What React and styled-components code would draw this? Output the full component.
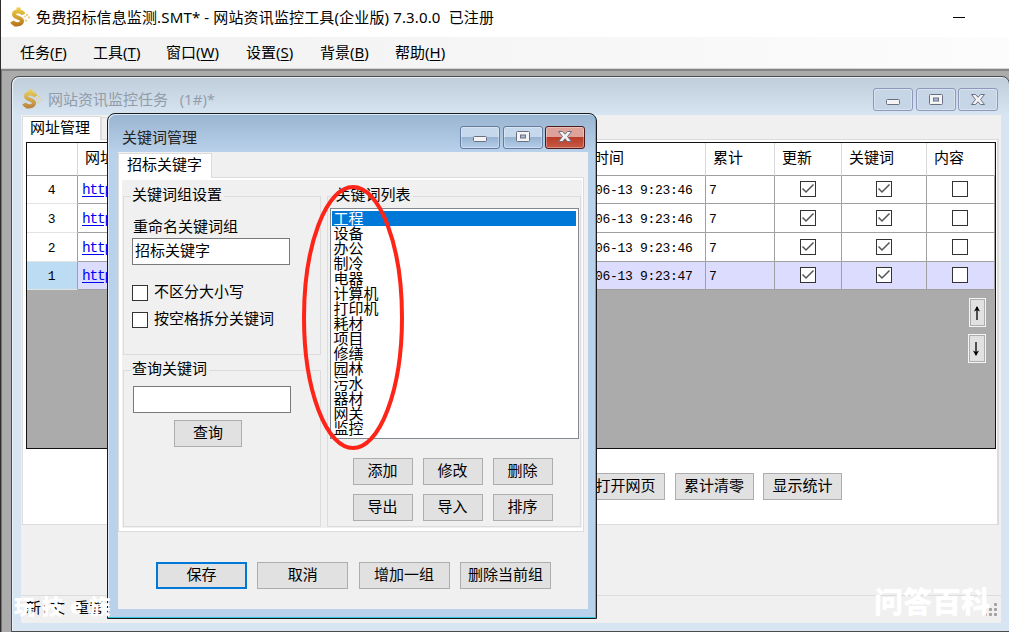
import React from "react";
import styled, { createGlobalStyle, css } from "styled-components";

const GlobalStyle = createGlobalStyle`
  * {
    box-sizing: border-box;
  }
  body {
    margin: 0;
    overflow: hidden;
    color: #000;
    font-family: "Liberation Mono", "Noto Sans CJK SC", sans-serif;
    font-size: 15px;
    line-height: 1;
    white-space: pre;
  }
`;

const Screen = styled.div`
  position: relative;
  display: flex;
  flex-direction: column;
  width: 1009px;
  height: 632px;
  overflow: hidden;
  border-left: 1px solid #2d2b2b;
  background: #ababab;
`;
const TitleBar = styled.header`
  display: flex;
  align-items: center;
  justify-content: space-between;
  height: 37px;
  padding: 0 44px 2px 9px;
  background: #fff;
  font-family: "Noto Sans", "Noto Sans CJK SC", sans-serif;
  letter-spacing: 0.14px;
`;
const TitleGroup = styled.div`
  display: flex;
  align-items: center;
  gap: 5px;
`;
const MinimizeLine = styled.div`
  width: 12px;
  height: 1px;
  background: #000;
`;
const MenuBar = styled.nav`
  display: flex;
  align-items: center;
  height: 32px;
  padding: 0 0 0 19px;
  gap: 25px;
  background: linear-gradient(90deg, #f0f0f0, #fcfcfc);
  border-bottom: 1px solid #d5d5d5;
  font-family: "Noto Sans", "Noto Sans CJK SC", sans-serif;
`;
const MenuItem = styled.span`
  width: ${(props) => props.$width}px;
  u {
    text-underline-offset: 2px;
  }
`;
const Workspace = styled.main`
  position: relative;
  flex: 1;
  border-top: 2px solid #858585;
  border-left: 1px solid #747474;
`;

const Window = styled.section`
  position: absolute;
  isolation: isolate;
  display: flex;
  flex-direction: column;
  border: 1px solid #4b4b4b;
  border-radius: 8px 8px 0 0;
`;
const TaskWindow = styled(Window)`
  left: 9px;
  top: 5px;
  width: 999px;
  height: 556px;
  padding: 0 8px 8px 9px;
  background: linear-gradient(#bfcddb, #d7e4f2 38px);
  box-shadow: inset 1px 1px 0 #e9f0f7;
`;
const KeywordWindow = styled(Window)`
  left: 105px;
  top: 42px;
  width: 490px;
  height: 506px;
  padding: 0 8px 9px 10px;
  border-color: #1b1b1b;
  background: linear-gradient(#99b4d1, #b9d1ea 38px);
  box-shadow: inset -1px -1px 0 #2fc4dc, inset 1px 1px 0 #dcebfa;
`;
const Caption = styled.div`
  display: flex;
  align-items: center;
  justify-content: space-between;
  height: 38px;
  padding: ${(props) => props.$padding};
  color: ${(props) => props.$color};
  font-family: "Open Sans", "Noto Sans CJK SC", sans-serif;
`;
const CaptionButtons = styled.div`
  display: flex;
  gap: 2.5px;
`;
const activeFace = css`
  border-color: #627b9f;
  background: linear-gradient(#c6d8eb 48%, #98b4d2 50%, #b4cee9);
`;
const closeFace = css`
  border-color: #4d1b1b;
  background: linear-gradient(#dda29a 46%, #bb3d2a 50%, #c65a45);
`;
const CaptionButton = styled.button`
  display: flex;
  align-items: center;
  justify-content: center;
  width: 40px;
  height: 23px;
  padding: 0;
  border: 1px solid #8f98bb;
  border-radius: 3px;
  background: #c7d6e7;
  box-shadow: inset 0 0 0 1px #ffffff55;
  ${(props) => props.$active && activeFace}
  ${(props) => props.$close && closeFace}
`;
const ClientArea = styled.div`
  display: flex;
  flex-direction: column;
  flex: 1;
  background: #f0f0f0;
`;

const Tabs = styled.div`
  display: flex;
  align-items: flex-end;
  height: ${(props) => props.$height}px;
  padding-left: ${(props) => props.$left || 0}px;
`;
const Tab = styled.div`
  display: flex;
  align-items: center;
  width: ${(props) => props.$width}px;
  height: ${(props) => props.$height}px;
  padding: 1px 0 0 ${(props) => props.$indent || 8}px;
  margin-bottom: -1px;
  z-index: 1;
  background: #fff;
  border: 1px solid #dcdcdc;
  border-bottom: 0;
`;
const SideTab = styled(Tab)`
  height: 22px;
  padding-left: 4px;
  margin-bottom: 0;
  background: #f0f0f0;
`;
const TaskPage = styled.div`
  height: 386px;
  margin: 0 2px 0 1px;
  padding: 2px 1px 0 3px;
  background: #fff;
  border: 1px solid #dcdcdc;
  border-width: 1px 2px 1px 1px;
`;
const Grid = styled.div`
  display: flex;
  flex-direction: column;
  width: 970px;
  height: 307px;
  border: 1px solid #111;
  background: #ababab;
`;
const GridRow = styled.div`
  display: grid;
  grid-template-columns: 51px 512px 116px 69px 67px 85px 68px;
  height: ${(props) => props.$height}px;
  background: ${(props) => (props.$selected ? "#dcdcff" : "#fff")};
`;
const Cell = styled.div`
  display: flex;
  align-items: center;
  padding: 2px 0 0 ${(props) => props.$left ?? 3}px;
  border-right: 1px solid #a0a0a0;
  border-bottom: 1px solid #a0a0a0;
  font-size: 13px;
  letter-spacing: -0.3px;
`;
const CheckCell = styled(Cell)`
  justify-content: center;
  padding: 0 1px 1px 0;
`;
const HeadCell = styled(Cell)`
  padding: 1px 0 0 ${(props) => props.$left ?? 7}px;
  border-right-color: #d8d8d8;
  font-size: 15px;
  letter-spacing: 0;
`;
const RowHead = styled(Cell)`
  justify-content: center;
  padding: 2px 1px 0 0;
  border-bottom-color: #e2e2e2;
  background: ${(props) => (props.$selected ? "#bcdcf4" : "#fff")};
`;
const Link = styled.a`
  color: #0000f8;
  font-size: 14.5px;
  letter-spacing: -1.2px;
  text-decoration: underline;
  text-underline-offset: 2px;
`;
const Box = styled.span`
  display: flex;
  flex: none;
  width: 16px;
  height: 16px;
  border: 1px solid #333;
  background: #fff;
`;
const MoveButtons = styled.div`
  display: flex;
  flex-direction: column;
  align-items: flex-end;
  gap: 7px;
  padding: 8px 9px 0 0;
`;
const MoveButton = styled.button`
  display: flex;
  align-items: center;
  justify-content: center;
  width: ${(props) => props.$width}px;
  height: 29px;
  padding: 0 2px 0 0;
  border: 1px solid #f5f5f5;
  background: #e1e1e1;
  box-shadow: inset 0 0 0 1px #adadad;
`;
const TaskActions = styled.div`
  display: flex;
  gap: 9.5px;
  padding: 24px 0 0 560px;
`;
const Button = styled.button`
  display: flex;
  align-items: center;
  justify-content: center;
  flex: none;
  width: ${(props) => props.$width || 60}px;
  height: 27px;
  margin: ${(props) => props.$margin || 0};
  padding: 2px 0 0;
  border: ${(props) => (props.$primary ? "2px solid #0078d7" : "1px solid #adadad")};
  background: #e1e1e1;
  color: #000;
  font: inherit;
`;
const StatusBar = styled.footer`
  display: flex;
  align-items: center;
  justify-content: space-between;
  height: 28px;
  margin-top: auto;
  padding: 0 3px 0 5px;
  border-top: 1px solid #dcdcdc;
`;

const KeywordPage = styled.div`
  display: flex;
  gap: 6px;
  width: 466px;
  height: 355px;
  padding: 10px 2px 3px 4px;
  background: #f0f0f0;
  border: 1px solid #dcdcdc;
  box-shadow: inset 3px 2px 0 #fff, inset -1px -3px 0 #fff;
`;
const GroupColumn = styled.div`
  display: flex;
  flex-direction: column;
  gap: 7px;
  width: 198px;
`;
const Group = styled.fieldset`
  display: flex;
  flex-direction: column;
  min-width: 0;
  width: ${(props) => props.$width}px;
  height: ${(props) => props.$height}px;
  margin: 0;
  padding: ${(props) => props.$padding};
  border: 1px solid #dcdcdc;
`;
const GroupTitle = styled.legend`
  height: 16px;
  margin-left: ${(props) => props.$shift}px;
  padding: 1px 2px 0 1px;
`;
const TextField = styled.input`
  width: 158px;
  height: 27px;
  margin: ${(props) => props.$margin};
  padding: 0 2px 3px;
  border: 1px solid #7a7a7a;
  background: #fff;
  font: inherit;
`;
const CheckLabel = styled.label`
  display: flex;
  align-items: center;
  gap: 6px;
  height: 16px;
  margin: ${(props) => props.$margin};
`;
const ListBox = styled.ul`
  width: 249px;
  height: 231px;
  margin: 0;
  padding: 2px 2px 0 1px;
  border: 1px solid #828790;
  background: #fff;
  list-style: none;
`;
const ListItem = styled.li`
  height: 15px;
  padding-left: 2px;
  line-height: 19px;
  color: ${(props) => (props.$selected ? "#fff" : "#000")};
  background: ${(props) => (props.$selected ? "#0078d7" : "transparent")};
`;
const ActionGrid = styled.div`
  display: grid;
  grid-template-columns: repeat(3, 60px);
  gap: 9px 10px;
  padding: 19px 0 0 23px;
`;
const DialogActions = styled.div`
  display: flex;
  gap: 10.3px;
  padding: 30px 0 0 38px;
`;
const EllipseMark = styled.svg`
  position: absolute;
  left: 299px;
  top: 184px;
`;
const Watermark = styled.div`
  position: absolute;
  left: ${(props) => props.$left}px;
  top: ${(props) => props.$top}px;
  color: #fff;
  font-family: "Noto Sans CJK SC", sans-serif;
  font-size: ${(props) => props.$size}px;
  font-weight: 900;
  letter-spacing: ${(props) => props.$spacing || 0}px;
`;

const DollarIcon = ({ faded }) => (
  <svg width="21" height="21" viewBox="0 0 21 21" opacity={faded ? 0.85 : 1}>
    <defs>
      <linearGradient id="gold" x1="0" y1="0" x2="0" y2="1">
        <stop offset="0" stopColor="#efd044" />
        <stop offset="0.6" stopColor="#cf9a30" />
        <stop offset="1" stopColor="#b3701f" />
      </linearGradient>
    </defs>
    <path
      d="M13.500 7.500C12 3.500 4 3.800 4 7.500C4 11 13 10.500 12 14.500C11 18.500 3.500 17.500 2 14.500M8.500 0.500V5M6 16V19.500"
      fill="none"
      stroke="url(#gold)"
      strokeWidth="4"
    />
    <g fill="#ead391">
      <circle cx="15" cy="9.500" r="1" />
      <circle cx="17" cy="8" r="1.200" />
      <circle cx="19" cy="10.500" r="1.200" />
      <circle cx="16" cy="13.500" r="1.200" />
    </g>
  </svg>
);

const WindowGlyph = ({ kind }) => (
  <svg width="16" height="14" viewBox="0 0 16 14">
    {kind === "min" && (
      <rect x="1.500" y="6.500" width="13" height="5" rx="1" fill="#f4f4f4" stroke="#6b6e82" />
    )}
    {kind === "max" && (
      <g fill="#f4f4f4" stroke="#6b6e82">
        <rect x="1.500" y="1.500" width="13" height="10" rx="1" />
        <rect x="5.500" y="5" width="5" height="3" fill="#a9bdd6" />
      </g>
    )}
    {kind === "close" && (
      <path
        d="M1.500 1.500H5.500L8 4.300L10.500 1.500H14.500L10.500 6.500L14.500 11.500H10.500L8 8.700L5.500 11.500H1.500L5.500 6.500Z"
        fill="#f4f4f4"
        stroke="#6b6e82"
      />
    )}
  </svg>
);

const WindowControls = ({ active }) => (
  <CaptionButtons>
    {["min", "max", "close"].map((kind) => (
      <CaptionButton key={kind} $active={active} $close={active && kind === "close"}>
        <WindowGlyph kind={kind} />
      </CaptionButton>
    ))}
  </CaptionButtons>
);

const Check = ({ checked }) => (
  <Box>
    {checked && (
      <svg width="14" height="14" viewBox="0 0 14 14">
        <path d="M1.500 6.500L5 10L12.500 2.500" fill="none" stroke="#555" strokeWidth="1.500" />
      </svg>
    )}
  </Box>
);

const Arrow = ({ down }) => (
  <svg width="8" height="16" viewBox="0 0 8 16" transform={down ? "rotate(180)" : undefined}>
    <path d="M4 15V2" stroke="#000" strokeWidth="1.300" />
    <path d="M4 1L7 6.500L4 5L1 6.500Z" fill="#000" />
  </svg>
);

const SizeGrip = () => (
  <svg width="15" height="15" viewBox="0 0 15 15" fill="#a0a0a0">
    {[[11, 1], [6, 6], [11, 6], [1, 11], [6, 11], [11, 11]].map(([x, y]) => (
      <rect key={`${x}-${y}`} x={x} y={y} width="3" height="3" rx="1" />
    ))}
  </svg>
);

const menus = [
  { name: "任务", hotkey: "F", width: 48 },
  { name: "工具", hotkey: "T", width: 48 },
  { name: "窗口", hotkey: "W", width: 55 },
  { name: "设置", hotkey: "S", width: 49 },
  { name: "背景", hotkey: "B", width: 50 },
  { name: "帮助", hotkey: "H", width: 51 },
];

const rows = [
  { id: 4, time: "06-13 9:23:46", height: 28 },
  { id: 3, time: "06-13 9:23:46", height: 29 },
  { id: 2, time: "06-13 9:23:46", height: 29 },
  { id: 1, time: "06-13 9:23:47", height: 28, selected: true },
];

const keywords = [
  "工程",
  "设备",
  "办公",
  "制冷",
  "电器",
  "计算机",
  "打印机",
  "耗材",
  "项目",
  "修缮",
  "园林",
  "污水",
  "器材",
  "网关",
  "监控",
];

const TaskGrid = () => (
  <Grid>
    <GridRow $height={33}>
      <HeadCell />
      <HeadCell>网址</HeadCell>
      <HeadCell $left={4}>时间</HeadCell>
      <HeadCell>累计</HeadCell>
      <HeadCell>更新</HeadCell>
      <HeadCell>关键词</HeadCell>
      <HeadCell>内容</HeadCell>
    </GridRow>
    {rows.map((row) => (
      <GridRow key={row.id} $height={row.height} $selected={row.selected}>
        <RowHead $selected={row.selected}>{row.id}</RowHead>
        <Cell $left={4}>
          <Link>http</Link>
        </Cell>
        <Cell $left={5}>{row.time}</Cell>
        <Cell>7</Cell>
        <CheckCell>
          <Check checked />
        </CheckCell>
        <CheckCell>
          <Check checked />
        </CheckCell>
        <CheckCell>
          <Check />
        </CheckCell>
      </GridRow>
    ))}
    <MoveButtons>
      <MoveButton $width={17}>
        <Arrow />
      </MoveButton>
      <MoveButton $width={18}>
        <Arrow down />
      </MoveButton>
    </MoveButtons>
  </Grid>
);

const KeywordDialog = () => (
  <KeywordWindow>
    <Caption $padding="8px 3px 0 4px" $color="#222">
      <span>关键词管理</span>
      <WindowControls active />
    </Caption>
    <ClientArea>
      <Tabs $height={25}>
        <Tab $width={94} $height={25}>
          招标关键字
        </Tab>
      </Tabs>
      <KeywordPage>
        <GroupColumn>
          <Group $height={167} $padding="17px 0 0 9px">
            <GroupTitle $shift={-2}>关键词组设置</GroupTitle>
            <span>重命名关键词组</span>
            <TextField $margin="2px 0 0 -1px" defaultValue="招标关键字" />
            <CheckLabel $margin="20px 0 0 -1px">
              <Check />
              不区分大小写
            </CheckLabel>
            <CheckLabel $margin="11px 0 0 -1px">
              <Check />
              按空格拆分关键词
            </CheckLabel>
          </Group>
          <Group $height={165} $padding="8px 0 0 9px">
            <GroupTitle $shift={-2}>查询关键词</GroupTitle>
            <TextField $margin="0" />
            <Button $width={68} $margin="7px 0 0 41px">
              查询
            </Button>
          </Group>
        </GroupColumn>
        <Group $width={255} $height={339} $padding="4px 0 0 2px">
          <GroupTitle $shift={5}>关键词列表</GroupTitle>
          <ListBox>
            {keywords.map((word, index) => (
              <ListItem key={word} $selected={index === 0}>
                {word}
              </ListItem>
            ))}
          </ListBox>
          <ActionGrid>
            {["添加", "修改", "删除", "导出", "导入", "排序"].map((name) => (
              <Button key={name}>{name}</Button>
            ))}
          </ActionGrid>
        </Group>
      </KeywordPage>
      <DialogActions>
        <Button $primary $width={91}>
          保存
        </Button>
        <Button $width={91}>取消</Button>
        <Button $width={91}>增加一组</Button>
        <Button $width={91}>删除当前组</Button>
      </DialogActions>
    </ClientArea>
  </KeywordWindow>
);

const App = () => {
  return (
    <>
      <GlobalStyle />
      <Screen>
        <TitleBar>
          <TitleGroup>
            <DollarIcon />
            <span>免费招标信息监测.SMT* - 网站资讯监控工具(企业版) 7.3.0.0  已注册</span>
          </TitleGroup>
          <MinimizeLine />
        </TitleBar>
        <MenuBar>
          {menus.map((menu) => (
            <MenuItem key={menu.hotkey} $width={menu.width}>
              {menu.name}(<u>{menu.hotkey}</u>)
            </MenuItem>
          ))}
        </MenuBar>
        <Workspace>
          <TaskWindow>
            <Caption $padding="7px 3px 0 1px" $color="#929ca8">
              <TitleGroup>
                <DollarIcon faded />
                <span>网站资讯监控任务   (1#)*</span>
              </TitleGroup>
              <WindowControls />
            </Caption>
            <ClientArea>
              <Tabs $height={24} $left={1}>
                <Tab $width={79} $height={24} $indent={7}>
                  网址管理
                </Tab>
                <SideTab $width={80}>-</SideTab>
              </Tabs>
              <TaskPage>
                <TaskGrid />
                <TaskActions>
                  <Button $width={79}>打开网页</Button>
                  <Button $width={79}>累计清零</Button>
                  <Button $width={79}>显示统计</Button>
                </TaskActions>
              </TaskPage>
              <StatusBar>
                <span>新:文 重置</span>
                <SizeGrip />
              </StatusBar>
            </ClientArea>
          </TaskWindow>
          <KeywordDialog />
        </Workspace>
        <EllipseMark width="108" height="268" viewBox="0 0 108 268">
          <ellipse cx="53" cy="133.500" rx="49" ry="130.500" fill="none" stroke="#ff2418" strokeWidth="4" />
        </EllipseMark>
        <Watermark $left={13} $top={595} $size={21} $spacing={7}>
          玩技e族
        </Watermark>
        <Watermark $left={873} $top={586} $size={29}>
          问答百科
        </Watermark>
      </Screen>
    </>
  );
};

export default App;
